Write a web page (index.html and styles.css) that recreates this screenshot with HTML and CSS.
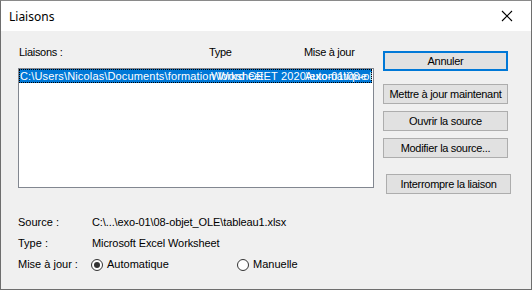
FILE: index.html
```html
<!DOCTYPE html>
<html lang="fr">
<head>
<meta charset="utf-8">
<title>Liaisons</title>
<link rel="stylesheet" href="styles.css">
</head>
<body>
<div class="window">
  <div class="titlebar">
    <span class="title">Liaisons</span>
    <svg class="close" width="12" height="12" viewBox="0 0 12 12"><path d="M1 1L11 11M11 1L1 11" stroke="#000" stroke-width="1.1" fill="none"/></svg>
  </div>
  <div class="content">
    <div class="main">
      <div class="left">
        <div class="cols head">
          <span class="c1">Liaisons :</span>
          <span class="c2">Type</span>
          <span class="c3">Mise à jour</span>
        </div>
        <div class="listbox">
          <div class="cols row sel">
            <span class="c1">C:\Users\Nicolas\Documents\formation Word CEET 2020\exo-01\08-objet_OLE\tableau1.xlsx</span>
            <span class="c2">Worksheet</span>
            <span class="c3">Automatique</span>
          </div>
        </div>
      </div>
      <div class="buttons">
        <button class="btn default">Annuler</button>
        <button class="btn b2">Mettre à jour maintenant</button>
        <button class="btn b3">Ouvrir la source</button>
        <button class="btn b3">Modifier la source...</button>
        <button class="btn b4">Interrompre la liaison</button>
      </div>
    </div>
    <div class="info">
      <span class="lbl">Source :</span><span class="val">C:\...\exo-01\08-objet_OLE\tableau1.xlsx</span>
      <span class="lbl">Type :</span><span class="val">Microsoft Excel Worksheet</span>
      <span class="lbl">Mise à jour :</span>
      <span class="val radios">
        <span class="radio r1"><span class="dot on"></span>Automatique</span>
        <span class="radio"><span class="dot"></span>Manuelle</span>
      </span>
    </div>
  </div>
</div>
</body>
</html>
```
FILE: styles.css
```css
* { box-sizing: border-box; }
html, body { margin: 0; padding: 0; }
body {
  width: 532px;
  height: 290px;
  font-family: "Liberation Sans", Arial, sans-serif;
  font-size: 11px;
  color: #000;
  background: #f0f0f0;
  overflow: hidden;
}
.window {
  width: 532px;
  height: 290px;
  border: 1px solid #6e6e6e;
  border-top-color: #8a8a8a;
  display: flex;
  flex-direction: column;
  background: #f0f0f0;
}
.titlebar {
  height: 30px;
  background: #fff;
  display: flex;
  align-items: center;
  justify-content: space-between;
  padding: 0 18px 0 8px;
  flex: none;
}
.title {
  font-family: "Noto Sans", "Open Sans", sans-serif;
  font-size: 12px;
  padding-top: 1px;
}
.close { display: block; }
.content {
  flex: 1;
  padding: 0 0 0 17px;
}
.main {
  display: flex;
  gap: 9px;
}
.left {
  padding-top: 15px;
  width: 356px;
}
.cols {
  display: grid;
  grid-template-columns: 190px 95px 1fr;
  white-space: nowrap;
}
.head {
  height: 22px;
  line-height: 13px;
  padding-left: 1px;
  letter-spacing: -0.3px;
}
.listbox {
  height: 120px;
  border: 1px solid #828790;
  background: #fff;
  padding: 0;
}
.row {
  height: 14px;
  line-height: 12px;
  background: #0078d7;
  color: #fff;
  overflow: hidden;
  outline: 1px dotted #000;
  outline-offset: -1px;
  margin-right: 1px;
  padding-left: 1px;
  padding-top: 1px;
}
.row .c1 { overflow: visible; letter-spacing: 0.15px; }
.row .c2 { padding-left: 1px; }
.buttons {
  padding-top: 20px;
  display: flex;
  flex-direction: column;
  align-items: flex-start;
}
.btn {
  font-family: "Liberation Sans", Arial, sans-serif;
  font-size: 11px;
  letter-spacing: -0.3px;
  width: 125px;
  height: 20px;
  background: #e1e1e1;
  border: 1px solid #adadad;
  padding: 0;
  color: #000;
  line-height: 16px;
}
.default {
  border: 2px solid #0078d7;
}
.b2 { margin-top: 13px; }
.b3 { margin-top: 7px; }
.b4 { margin-top: 16px; margin-left: 3px; }
.info {
  margin-top: 22px;
  display: grid;
  grid-template-columns: 74px 1fr;
  row-gap: 8px;
  line-height: 13px;
}
.val { letter-spacing: -0.1px; }
.radios {
  display: flex;
  letter-spacing: 0;
}
.radio {
  display: flex;
  align-items: center;
  gap: 4px;
  margin-left: -1px;
}
.r1 { width: 147px; }
.dot {
  width: 12px;
  height: 12px;
  border: 1px solid #333;
  border-radius: 50%;
  background: #fff;
  display: flex;
  align-items: center;
  justify-content: center;
}
.dot.on::after {
  content: "";
  width: 6px;
  height: 6px;
  border-radius: 50%;
  background: #333;
}
```
